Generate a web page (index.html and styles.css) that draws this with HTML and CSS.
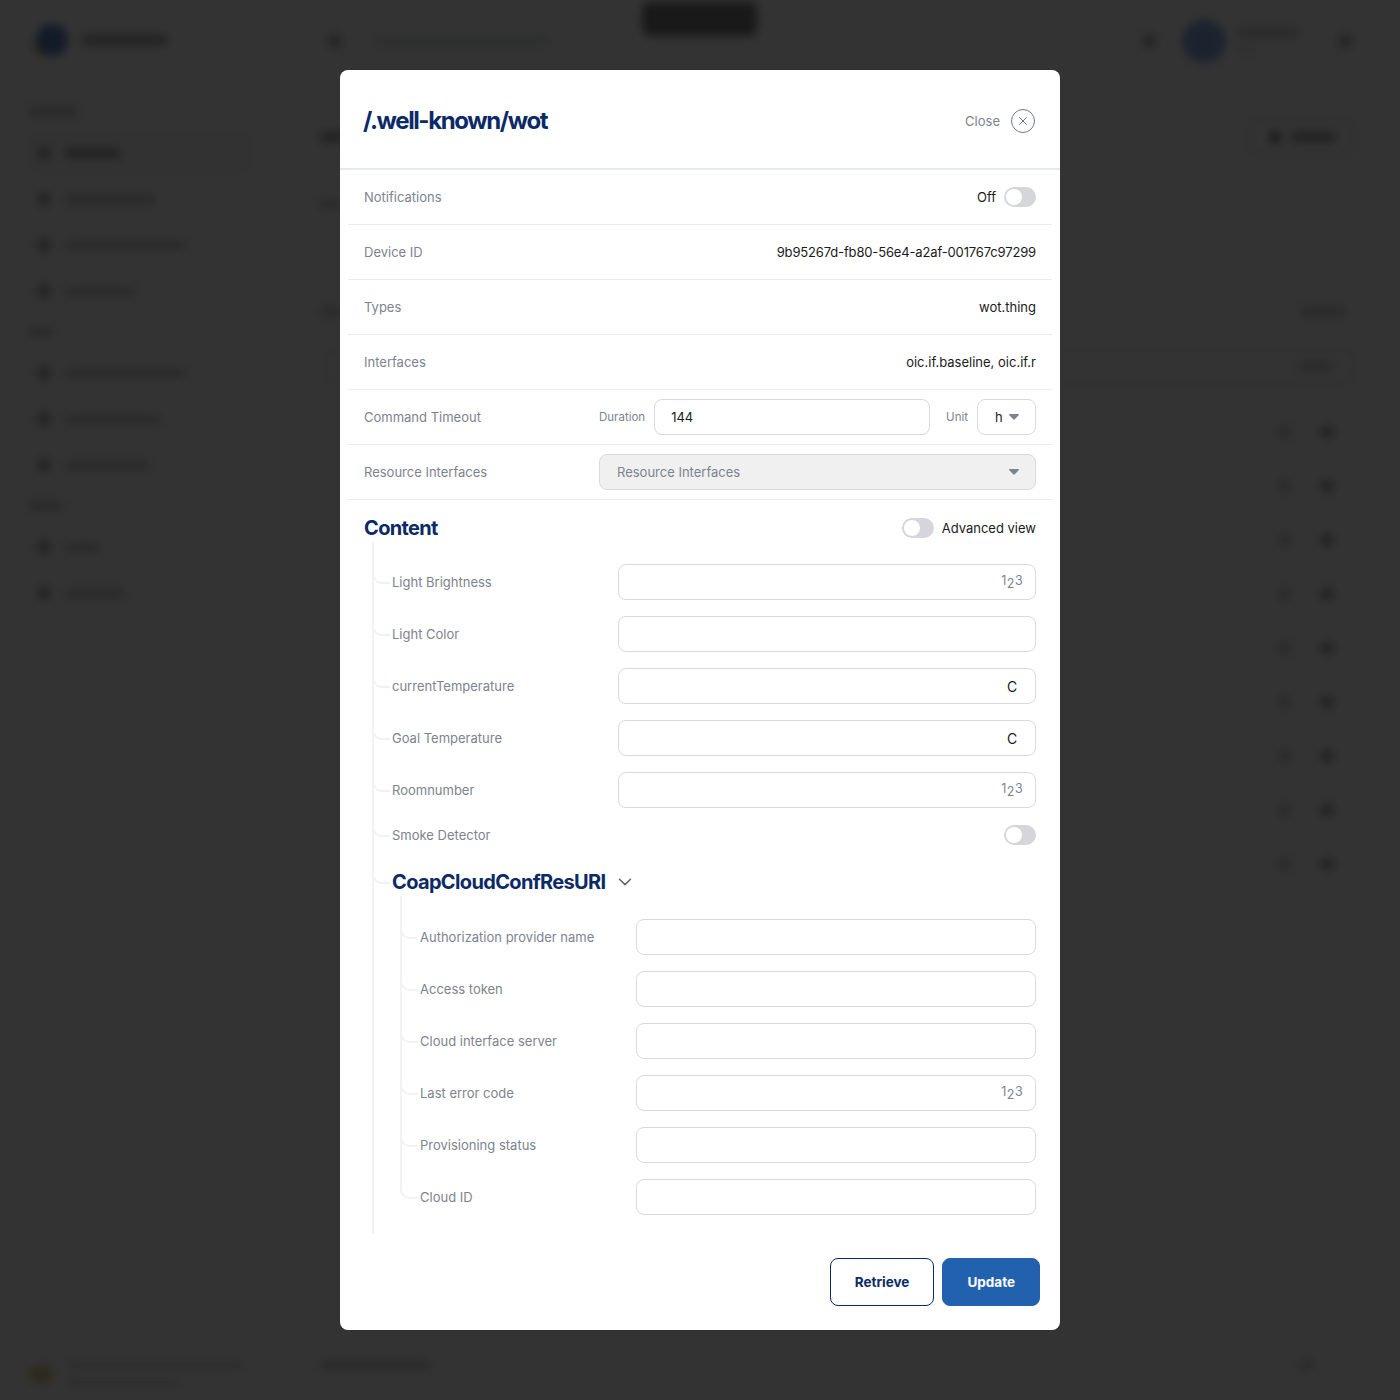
FILE: index.html
```html
<!DOCTYPE html>
<html lang="en">
<head>
<meta charset="UTF-8">
<meta name="viewport" content="width=device-width, initial-scale=1.0">
<title>/.well-known/wot</title>
<link rel="stylesheet" href="styles.css">
</head>
<body>

<!-- page behind the modal, blurred so only shapes are left -->
<div class="backdrop" aria-hidden="true">
    <div class="toast"></div>
    <aside class="sidebar">
        <div class="logo">
            <span class="logo-mark"></span>
            <span class="bar bar-dark w-85"></span>
        </div>
        <div class="nav-label"><span class="bar w-50"></span></div>
        <div class="nav-item nav-item-active"><span class="dot"></span><span class="bar bar-dark w-55"></span></div>
        <div class="nav-item"><span class="dot"></span><span class="bar w-90"></span></div>
        <div class="nav-item"><span class="dot"></span><span class="bar w-120"></span></div>
        <div class="nav-item"><span class="dot"></span><span class="bar w-70"></span></div>
        <div class="nav-label nav-label-next"><span class="bar w-25"></span></div>
        <div class="nav-item"><span class="dot"></span><span class="bar w-120"></span></div>
        <div class="nav-item"><span class="dot"></span><span class="bar w-95"></span></div>
        <div class="nav-item"><span class="dot"></span><span class="bar w-85"></span></div>
        <div class="nav-label nav-label-next"><span class="bar w-35"></span></div>
        <div class="nav-item"><span class="dot"></span><span class="bar w-35"></span></div>
        <div class="nav-item"><span class="dot"></span><span class="bar w-60"></span></div>
        <div class="side-footer">
            <span class="version-mark"></span>
            <div class="side-footer-text">
                <span class="bar bar-faint w-175"></span>
                <span class="bar bar-faint w-110"></span>
            </div>
        </div>
    </aside>
    <main class="main">
        <div class="topbar">
            <span class="dot"></span>
            <span class="bar bar-faint w-175"></span>
            <div class="topbar-right">
                <span class="dot"></span>
                <span class="avatar"></span>
                <div class="user-text">
                    <span class="bar w-60"></span>
                    <span class="bar bar-faint w-15"></span>
                </div>
                <span class="dot"></span>
            </div>
        </div>
        <div class="main-head">
            <span class="bar bar-dark w-25"></span>
            <div class="ghost-btn"><span class="dot dot-small"></span><span class="bar bar-dark w-45"></span></div>
        </div>
        <div class="main-sub"><span class="bar w-20"></span></div>
        <div class="main-filter">
            <span class="bar w-20"></span>
            <span class="bar w-45"></span>
        </div>
        <div class="table-head"><span class="bar w-35"></span></div>
        <div class="table-row"><span class="dot dot-faint"></span><span class="dot"></span></div>
        <div class="table-row"><span class="dot dot-faint"></span><span class="dot"></span></div>
        <div class="table-row"><span class="dot dot-faint"></span><span class="dot"></span></div>
        <div class="table-row"><span class="dot dot-faint"></span><span class="dot"></span></div>
        <div class="table-row"><span class="dot dot-faint"></span><span class="dot"></span></div>
        <div class="table-row"><span class="dot dot-faint"></span><span class="dot"></span></div>
        <div class="table-row"><span class="dot dot-faint"></span><span class="dot"></span></div>
        <div class="table-row"><span class="dot dot-faint"></span><span class="dot"></span></div>
        <div class="table-row"><span class="dot dot-faint"></span><span class="dot"></span></div>
        <div class="main-footer">
            <span class="bar w-110"></span>
            <span class="dot dot-faint"></span>
        </div>
    </main>
</div>

<div class="overlay">
    <div class="modal">
        <div class="modal-header">
            <h1 class="modal-title">/.well-known/wot</h1>
            <div class="close">
                <span>Close</span>
                <svg class="close-icon" width="24" height="24" viewBox="0 0 24 24" fill="none" stroke="#6f7683">
                    <circle cx="12" cy="12" r="11.5"/>
                    <path d="M8.5 8.5l7 7M15.5 8.5l-7 7" stroke-linecap="round"/>
                </svg>
            </div>
        </div>

        <div class="row">
            <span class="row-label">Notifications</span>
            <div class="switch-group">
                <span class="row-value">Off</span>
                <span class="switch"></span>
            </div>
        </div>
        <div class="row">
            <span class="row-label">Device ID</span>
            <span class="row-value row-value-id">9b95267d-fb80-56e4-a2af-001767c97299</span>
        </div>
        <div class="row">
            <span class="row-label">Types</span>
            <span class="row-value">wot.thing</span>
        </div>
        <div class="row">
            <span class="row-label">Interfaces</span>
            <span class="row-value">oic.if.baseline, oic.if.r</span>
        </div>
        <div class="row">
            <span class="row-label row-label-fixed">Command Timeout</span>
            <div class="timeout">
                <label class="small-label" for="duration">Duration</label>
                <input class="field field-duration" id="duration" type="text" value="144">
                <span class="small-label small-label-unit">Unit</span>
                <div class="select select-unit">
                    <span>h</span>
                    <svg class="caret" width="10" height="6" viewBox="0 0 10 6"><path d="M.6 0h8.8c.5 0 .8.6.5 1L5.5 5.6c-.3.3-.7.3-1 0L.1 1C-.2.6.1 0 .6 0z"/></svg>
                </div>
            </div>
        </div>
        <div class="row">
            <span class="row-label row-label-fixed">Resource Interfaces</span>
            <div class="select select-disabled">
                <span>Resource Interfaces</span>
                <svg class="caret" width="10" height="6" viewBox="0 0 10 6"><path d="M.6 0h8.8c.5 0 .8.6.5 1L5.5 5.6c-.3.3-.7.3-1 0L.1 1C-.2.6.1 0 .6 0z"/></svg>
            </div>
        </div>

        <div class="content">
            <div class="content-head">
                <h2 class="section-title">Content</h2>
                <div class="switch-group">
                    <span class="switch"></span>
                    <span class="row-value">Advanced view</span>
                </div>
            </div>

            <div class="tree">
                <div class="tree-row">
                    <span class="tree-label">Light Brightness</span>
                    <div class="field-wrap">
                        <input class="field" type="text">
                        <span class="suffix suffix-num"><span>1</span><span class="num-low">2</span><span>3</span></span>
                    </div>
                </div>
                <div class="tree-row">
                    <span class="tree-label">Light Color</span>
                    <div class="field-wrap"><input class="field" type="text"></div>
                </div>
                <div class="tree-row">
                    <span class="tree-label">currentTemperature</span>
                    <div class="field-wrap">
                        <input class="field" type="text">
                        <span class="suffix">C</span>
                    </div>
                </div>
                <div class="tree-row">
                    <span class="tree-label">Goal Temperature</span>
                    <div class="field-wrap">
                        <input class="field" type="text">
                        <span class="suffix">C</span>
                    </div>
                </div>
                <div class="tree-row">
                    <span class="tree-label">Roomnumber</span>
                    <div class="field-wrap">
                        <input class="field" type="text">
                        <span class="suffix suffix-num"><span>1</span><span class="num-low">2</span><span>3</span></span>
                    </div>
                </div>
                <div class="tree-row tree-row-switch">
                    <span class="tree-label">Smoke Detector</span>
                    <span class="switch"></span>
                </div>

                <div class="tree-row tree-row-head">
                    <h2 class="section-title">CoapCloudConfResURI</h2>
                    <svg class="chevron" width="14" height="8" viewBox="0 0 14 8" fill="none" stroke="#5d6673" stroke-width="1.5">
                        <path d="M1.5 1.2L7 6.6l5.5-5.4" stroke-linecap="round" stroke-linejoin="round"/>
                    </svg>
                </div>

                <div class="tree tree-sub">
                    <div class="tree-row">
                        <span class="tree-label">Authorization provider name</span>
                        <div class="field-wrap"><input class="field" type="text"></div>
                    </div>
                    <div class="tree-row">
                        <span class="tree-label">Access token</span>
                        <div class="field-wrap"><input class="field" type="text"></div>
                    </div>
                    <div class="tree-row">
                        <span class="tree-label">Cloud interface server</span>
                        <div class="field-wrap"><input class="field" type="text"></div>
                    </div>
                    <div class="tree-row">
                        <span class="tree-label">Last error code</span>
                        <div class="field-wrap">
                            <input class="field" type="text">
                            <span class="suffix suffix-num"><span>1</span><span class="num-low">2</span><span>3</span></span>
                        </div>
                    </div>
                    <div class="tree-row">
                        <span class="tree-label">Provisioning status</span>
                        <div class="field-wrap"><input class="field" type="text"></div>
                    </div>
                    <div class="tree-row">
                        <span class="tree-label">Cloud ID</span>
                        <div class="field-wrap"><input class="field" type="text"></div>
                    </div>
                </div>
            </div>
        </div>

        <div class="modal-footer">
            <button class="btn btn-outline" type="button">Retrieve</button>
            <button class="btn btn-primary" type="button">Update</button>
        </div>
    </div>
</div>

</body>
</html>
```

FILE: styles.css
```css
* {
    box-sizing: border-box;
}

body {
    margin: 0;
    height: 1400px;
    overflow: hidden;
    font-family: Inter, "Liberation Sans", sans-serif;
    font-size: 13px;
    color: #1a1a1a;
    background-color: #fff;
}

/* blurred page behind the modal */
.backdrop {
    display: flex;
    height: 1400px;
    background-color: #fff;
    filter: blur(5px);
}

.toast {
    position: absolute;
    top: 2px;
    left: 642px;
    width: 115px;
    height: 34px;
    border-radius: 8px;
    background-color: #7c7c7c;
}

.sidebar {
    position: relative;
    width: 280px;
    padding: 0 25px;
    flex-shrink: 0;
}

.logo {
    display: flex;
    align-items: center;
    gap: 14px;
    height: 80px;
    padding-left: 11px;
    margin-bottom: 27px;
}

.logo-mark {
    width: 32px;
    height: 32px;
    border-radius: 50%;
    background-color: #5d86c8;
    box-shadow: -8px 6px 0 -6px #e8b04a;
}

.nav-label {
    height: 14px;
    margin-bottom: 9px;
    padding-left: 3px;
}

.nav-label-next {
    margin-top: 13px;
}

.nav-item {
    display: flex;
    align-items: center;
    gap: 14px;
    height: 46px;
    padding-left: 12px;
    border-radius: 10px;
}

.nav-item-active {
    background-color: #f7f9f8;
}

.side-footer {
    position: absolute;
    left: 30px;
    bottom: 14px;
    display: flex;
    align-items: center;
    gap: 16px;
}

.version-mark {
    width: 22px;
    height: 18px;
    border-radius: 6px;
    background-color: #e6c790;
}

.side-footer-text,
.user-text {
    display: flex;
    flex-direction: column;
    gap: 9px;
}

.bar {
    display: block;
    height: 9px;
    border-radius: 3px;
    background-color: #c6caca;
}

.bar-dark {
    height: 10px;
    background-color: #a4a4a4;
}

.bar-faint {
    height: 8px;
    background-color: #dde0e2;
}

.dot {
    display: block;
    width: 14px;
    height: 14px;
    border-radius: 50%;
    background-color: #aaa;
    flex-shrink: 0;
}

.dot-small {
    width: 12px;
    height: 12px;
    background-color: #777;
}

.dot-faint {
    background-color: #d0d0d0;
}

.w-15 { width: 15px; }
.w-20 { width: 20px; }
.w-25 { width: 25px; }
.w-35 { width: 35px; }
.w-45 { width: 45px; }
.w-50 { width: 50px; }
.w-55 { width: 55px; }
.w-60 { width: 60px; }
.w-70 { width: 70px; }
.w-85 { width: 85px; }
.w-90 { width: 90px; }
.w-95 { width: 95px; }
.w-110 { width: 110px; }
.w-120 { width: 120px; }
.w-175 { width: 175px; }

.main {
    position: relative;
    flex: 1;
    padding: 0 45px 0 40px;
}

.topbar {
    display: flex;
    align-items: center;
    gap: 33px;
    height: 82px;
    padding-left: 8px;
}

.topbar-right {
    display: flex;
    align-items: center;
    gap: 12px;
    margin-left: auto;
    padding-right: 3px;
}

.topbar-right .dot:first-child {
    margin-right: 14px;
}

.topbar-right .dot:last-child {
    margin-left: 28px;
}

.avatar {
    width: 44px;
    height: 44px;
    border-radius: 50%;
    background-color: #8eb0ea;
}

.main-head {
    display: flex;
    align-items: center;
    justify-content: space-between;
    height: 37px;
    margin-top: 36px;
}

.ghost-btn {
    display: flex;
    align-items: center;
    justify-content: center;
    gap: 10px;
    width: 105px;
    height: 37px;
    border: 2px solid #d8d8d8;
    border-radius: 8px;
}

.main-sub {
    margin-top: 45px;
}

.main-filter {
    display: flex;
    align-items: center;
    justify-content: space-between;
    margin-top: 98px;
    padding-right: 10px;
}

.table-head {
    display: flex;
    align-items: center;
    justify-content: flex-end;
    height: 35px;
    margin: 33px 0 21px 5px;
    padding-right: 20px;
    border: 2px solid #e6e6e6;
    border-radius: 8px;
}

.table-row {
    display: flex;
    align-items: center;
    justify-content: flex-end;
    gap: 28px;
    height: 54px;
    padding-right: 21px;
}

.main-footer {
    position: absolute;
    left: 40px;
    right: 45px;
    bottom: 28px;
    display: flex;
    align-items: center;
    justify-content: space-between;
    padding-right: 42px;
}

/* modal */
.overlay {
    position: fixed;
    inset: 0;
    display: flex;
    align-items: center;
    justify-content: center;
    background-color: rgba(0, 0, 0, 0.8);
}

.modal {
    width: 720px;
    border-radius: 8px;
    background-color: #fff;
}

.modal-header {
    display: flex;
    align-items: center;
    justify-content: space-between;
    height: 100px;
    padding: 4px 25px 0 24px;
    border-bottom: 2px solid #e7ebf0;
}

.modal-title {
    margin: 0 0 0 -1px;
    font-size: 24px;
    line-height: 32px;
    font-weight: 700;
    letter-spacing: -1.4px;
    color: #0b2a66;
}

.close {
    display: flex;
    align-items: center;
    gap: 11px;
    color: #7d838e;
}

.close-icon {
    display: block;
}

.row {
    display: flex;
    align-items: center;
    justify-content: space-between;
    height: 55px;
    margin: 0 8px;
    padding: 0 16px;
    border-bottom: 1px solid #e9ecf1;
}

.row-label {
    color: #7d838e;
}

.row-label-fixed {
    width: 235px;
    flex-shrink: 0;
}

.row-value {
    color: #1a1a1a;
}

.row-value-id {
    letter-spacing: -0.15px;
}

.switch-group {
    display: flex;
    align-items: center;
    gap: 8px;
}

.switch {
    position: relative;
    display: block;
    width: 32px;
    height: 20px;
    border-radius: 10px;
    background-color: #d4d6d9;
    flex-shrink: 0;
}

.switch::after {
    content: "";
    position: absolute;
    top: 2px;
    left: 2px;
    width: 16px;
    height: 16px;
    border-radius: 50%;
    background-color: #fff;
}

.timeout {
    display: flex;
    align-items: center;
    flex: 1;
}

.small-label {
    font-size: 11.5px;
    color: #7d838e;
    margin-right: 9px;
    flex-shrink: 0;
}

.small-label-unit {
    margin-left: 16px;
    margin-right: 9px;
}

.field {
    display: block;
    width: 100%;
    height: 36px;
    padding: 0 16px;
    border: 1px solid #d9dadd;
    border-radius: 8px;
    font-family: inherit;
    font-size: 13px;
    color: #1a1a1a;
    background-color: #fff;
    outline: none;
}

.field-duration {
    flex: 1;
    width: auto;
    min-width: 0;
}

.select {
    display: flex;
    align-items: center;
    justify-content: space-between;
    height: 36px;
    padding: 0 16px 0 17px;
    border: 1px solid #d9dadd;
    border-radius: 8px;
}

.select-unit {
    width: 59px;
    flex-shrink: 0;
}

.select-disabled {
    flex: 1;
    color: #7d838e;
    background-color: #f0f0f0;
}

.caret {
    display: block;
    fill: #7d838e;
}

.content {
    padding: 18px 24px 0;
}

.content-head {
    display: flex;
    align-items: center;
    justify-content: space-between;
    height: 20px;
    margin-bottom: 4px;
}

.section-title {
    margin: 0;
    font-size: 20px;
    line-height: 24px;
    font-weight: 700;
    letter-spacing: -0.65px;
    color: #0b2a66;
}

/* the tree lines are drawn with pseudo elements */
.tree {
    position: relative;
    display: flex;
    flex-direction: column;
    gap: 16px;
    margin-left: 8px;
    padding: 22px 0 19px 20px;
}

.tree::before {
    content: "";
    position: absolute;
    top: 0;
    bottom: 0;
    left: 0;
    width: 2px;
    background-color: #f1f2f4;
}

.tree-sub {
    margin-top: -14px;
    padding: 23px 0 0 20px;
}

.tree-sub::before {
    bottom: 23px;
}

.tree-row {
    position: relative;
    display: flex;
    align-items: center;
    justify-content: space-between;
    min-height: 36px;
}

.tree-row::before {
    content: "";
    position: absolute;
    top: calc(50% - 12px);
    left: -20px;
    width: 16px;
    height: 12px;
    border-left: 2px solid #f1f2f4;
    border-bottom: 2px solid #f1f2f4;
    border-bottom-left-radius: 10px;
}

.tree-row-switch {
    min-height: 22px;
}

.tree-row-head {
    justify-content: flex-start;
    gap: 12px;
    min-height: 24px;
    margin-top: 8px;
}

.tree-label {
    color: #7d838e;
}

.field-wrap {
    position: relative;
    width: 418px;
    flex-shrink: 0;
}

.tree-sub .field-wrap {
    width: 400px;
}

.suffix {
    position: absolute;
    top: 0;
    right: 12px;
    bottom: 0;
    display: flex;
    align-items: center;
    justify-content: center;
    width: 24px;
    font-size: 14px;
}

.suffix-num {
    gap: 0.5px;
    font-size: 12.5px;
    color: #7d838e;
    padding-bottom: 4px;
}

.num-low {
    padding-top: 7px;
}

.chevron {
    display: block;
}

.modal-footer {
    display: flex;
    justify-content: flex-end;
    gap: 8px;
    padding: 24px 20px 24px 0;
}

.btn {
    height: 48px;
    padding: 0 24px;
    border-radius: 8px;
    font-family: inherit;
    font-size: 13.5px;
    font-weight: 700;
}

.btn-outline {
    border: 1px solid #0b2a66;
    color: #0b2a66;
    background-color: #fff;
}

.btn-primary {
    border: 1px solid #2261ae;
    color: #fff;
    background-color: #2261ae;
}
```
